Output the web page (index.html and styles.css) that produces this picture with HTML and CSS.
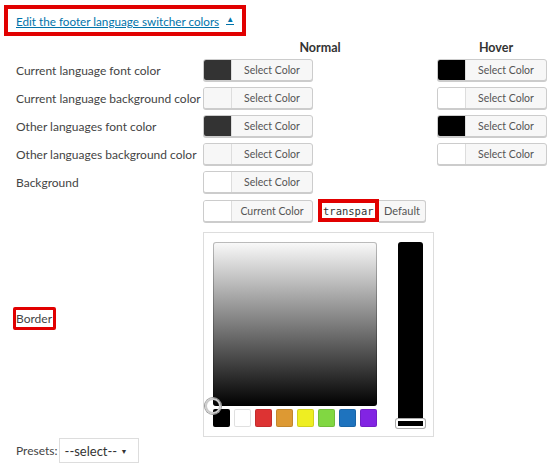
FILE: index.html
```html
<!DOCTYPE html>
<html lang="en">
<head>
  <meta charset="UTF-8">
  <title>Footer Switcher Colors</title>
  <link rel="stylesheet" href="styles.css">
</head>
<body>
  <div class="toggle-box">
    <a href="#" class="toggle">Edit the footer language switcher colors</a><span class="arrow">&#9650;</span>
  </div>

  <div class="colors">
    <div></div>
    <div class="col-head">Normal</div>
    <div class="col-head">Hover</div>

    <div class="label">Current language font color</div>
    <div><button class="pick"><span class="swatch dark"></span><span class="txt">Select Color</span></button></div>
    <div><button class="pick"><span class="swatch black"></span><span class="txt">Select Color</span></button></div>

    <div class="label">Current language background color</div>
    <div><button class="pick"><span class="swatch"></span><span class="txt">Select Color</span></button></div>
    <div><button class="pick"><span class="swatch white"></span><span class="txt">Select Color</span></button></div>

    <div class="label">Other languages font color</div>
    <div><button class="pick"><span class="swatch dark"></span><span class="txt">Select Color</span></button></div>
    <div><button class="pick"><span class="swatch black"></span><span class="txt">Select Color</span></button></div>

    <div class="label">Other languages background color</div>
    <div><button class="pick"><span class="swatch"></span><span class="txt">Select Color</span></button></div>
    <div><button class="pick"><span class="swatch white"></span><span class="txt">Select Color</span></button></div>

    <div class="label">Background</div>
    <div><button class="pick"><span class="swatch white"></span><span class="txt">Select Color</span></button></div>
    <div></div>

    <div class="label"><span class="mark">Border</span></div>
    <div class="open-picker">
      <div class="picker-bar">
        <button class="pick"><span class="swatch white"></span><span class="txt">Current Color</span></button>
        <input class="hex" type="text" value="transpar">
        <button class="btn-default">Default</button>
      </div>
      <div class="picker">
        <div class="pane">
          <div class="square"><span class="handle"></span></div>
          <div class="palette">
            <span style="background:#000"></span>
            <span style="background:#fff"></span>
            <span style="background:#dd3333"></span>
            <span style="background:#dd9933"></span>
            <span style="background:#eeee22"></span>
            <span style="background:#81d742"></span>
            <span style="background:#1e73be"></span>
            <span style="background:#8224e3"></span>
          </div>
        </div>
        <div class="strip"><span class="strip-handle"></span></div>
      </div>
    </div>
    <div></div>
  </div>

  <div class="presets">
    <label>Presets:</label>
    <div class="select"><span>--select--</span><span class="caret">&#9660;</span></div>
  </div>
</body>
</html>
```

FILE: styles.css
```css
body {
  margin: 0;
  font-family: Lato, "Open Sans", sans-serif;
  font-size: 12px;
  color: #444;
  background: #fff;
}
.toggle-box {
  display: flex;
  align-items: center;
  margin: 5px 0 0 4px;
  border: 4px solid #e10000;
  padding: 0 8px;
  width: 218px;
  height: 23px;
  white-space: nowrap;
}
.toggle {
  color: #0073aa;
  font-size: 11.7px;
  text-decoration: underline;
}
.arrow {
  color: #0073aa;
  font-size: 8px;
  margin: 0 0 2px 7px;
  border-bottom: 1px solid #0073aa;
  line-height: 9px;
}
.colors {
  display: grid;
  grid-template-columns: 187px 234px 118px;
  row-gap: 6px;
  margin: 4px 0 0 16px;
  align-items: center;
}
.col-head {
  text-align: center;
  font-weight: bold;
  font-size: 12.5px;
  color: #333;
  line-height: 16px;
  margin-bottom: -3px;
}
.label {
  white-space: nowrap;
}
.pick {
  display: flex;
  width: 110px;
  height: 22px;
  padding: 0;
  border: 1px solid #ccc;
  border-radius: 3px;
  background: #f7f7f7;
  box-shadow: 0 1px 0 #ccc;
  overflow: hidden;
  cursor: pointer;
  font-family: inherit;
}
.swatch {
  width: 27px;
  height: 100%;
  border-right: 1px solid #ddd;
  background: #f7f7f7;
}
.swatch.dark { background: #333; }
.swatch.black { background: #000; }
.swatch.white { background: #fff; }
.txt {
  flex: 1;
  font-size: 10.5px;
  color: #555;
  line-height: 20px;
  text-align: center;
}
.mark {
  margin-left: -3px;
  border: 3px solid #e10000;
  border-radius: 2px;
  padding: 1px 1px 1px 0;
  color: #444;
}
.picker-bar {
  display: flex;
  align-items: center;
}
.hex {
  margin-left: 5px;
  width: 61px;
  height: 23px;
  box-sizing: border-box;
  border: 4px solid #e10000;
  padding: 0 1px;
  font-family: "DejaVu Sans Mono", monospace;
  font-size: 10.5px;
  color: #333;
}
.btn-default {
  height: 22px;
  padding: 0 5px;
  border: 1px solid #ccc;
  border-left: 0;
  border-radius: 0 3px 3px 0;
  background: #f7f7f7;
  box-shadow: 0 1px 0 #ccc;
  font-family: inherit;
  font-size: 11px;
  color: #555;
}
.picker {
  display: flex;
  margin-top: 10px;
  width: 231px;
  height: 205px;
  box-sizing: border-box;
  border: 1px solid #ddd;
  padding: 9px 10px 0 9px;
}
.pane {
  width: 164px;
}
.square {
  position: relative;
  height: 164px;
  border-radius: 3px;
  background: linear-gradient(#fafafa, #000);
  box-shadow: inset 0 0 0 1px rgba(0,0,0,0.25);
}
.handle {
  position: absolute;
  left: -8px;
  bottom: -8px;
  width: 12px;
  height: 12px;
  border-radius: 50%;
  border: 2px solid #ccc;
  box-shadow: 0 0 0 1px #999;
}
.palette {
  display: flex;
  gap: 4px;
  margin-top: 3px;
}
.palette span {
  width: 17px;
  height: 18px;
  border-radius: 2px;
  box-shadow: inset 0 0 0 1px rgba(0,0,0,0.12);
}
.strip {
  position: relative;
  margin-left: 21px;
  width: 25px;
  height: 181px;
  border-radius: 3px;
  background: #000;
}
.strip-handle {
  position: absolute;
  left: -2px;
  bottom: -5px;
  width: 25px;
  height: 5px;
  border: 2px solid #fff;
  border-radius: 2px;
  background: #000;
  box-shadow: 0 0 0 1px #aaa;
}
.presets {
  display: flex;
  align-items: center;
  margin: 1px 0 0 16px;
}
.presets label {
  margin-right: 1px;
}
.select {
  display: flex;
  justify-content: space-between;
  align-items: center;
  width: 80px;
  height: 25px;
  box-sizing: border-box;
  border: 1px solid #ddd;
  padding: 0 10px 0 5px;
  font-size: 13px;
  color: #333;
}
.caret {
  font-size: 7px;
}
```
